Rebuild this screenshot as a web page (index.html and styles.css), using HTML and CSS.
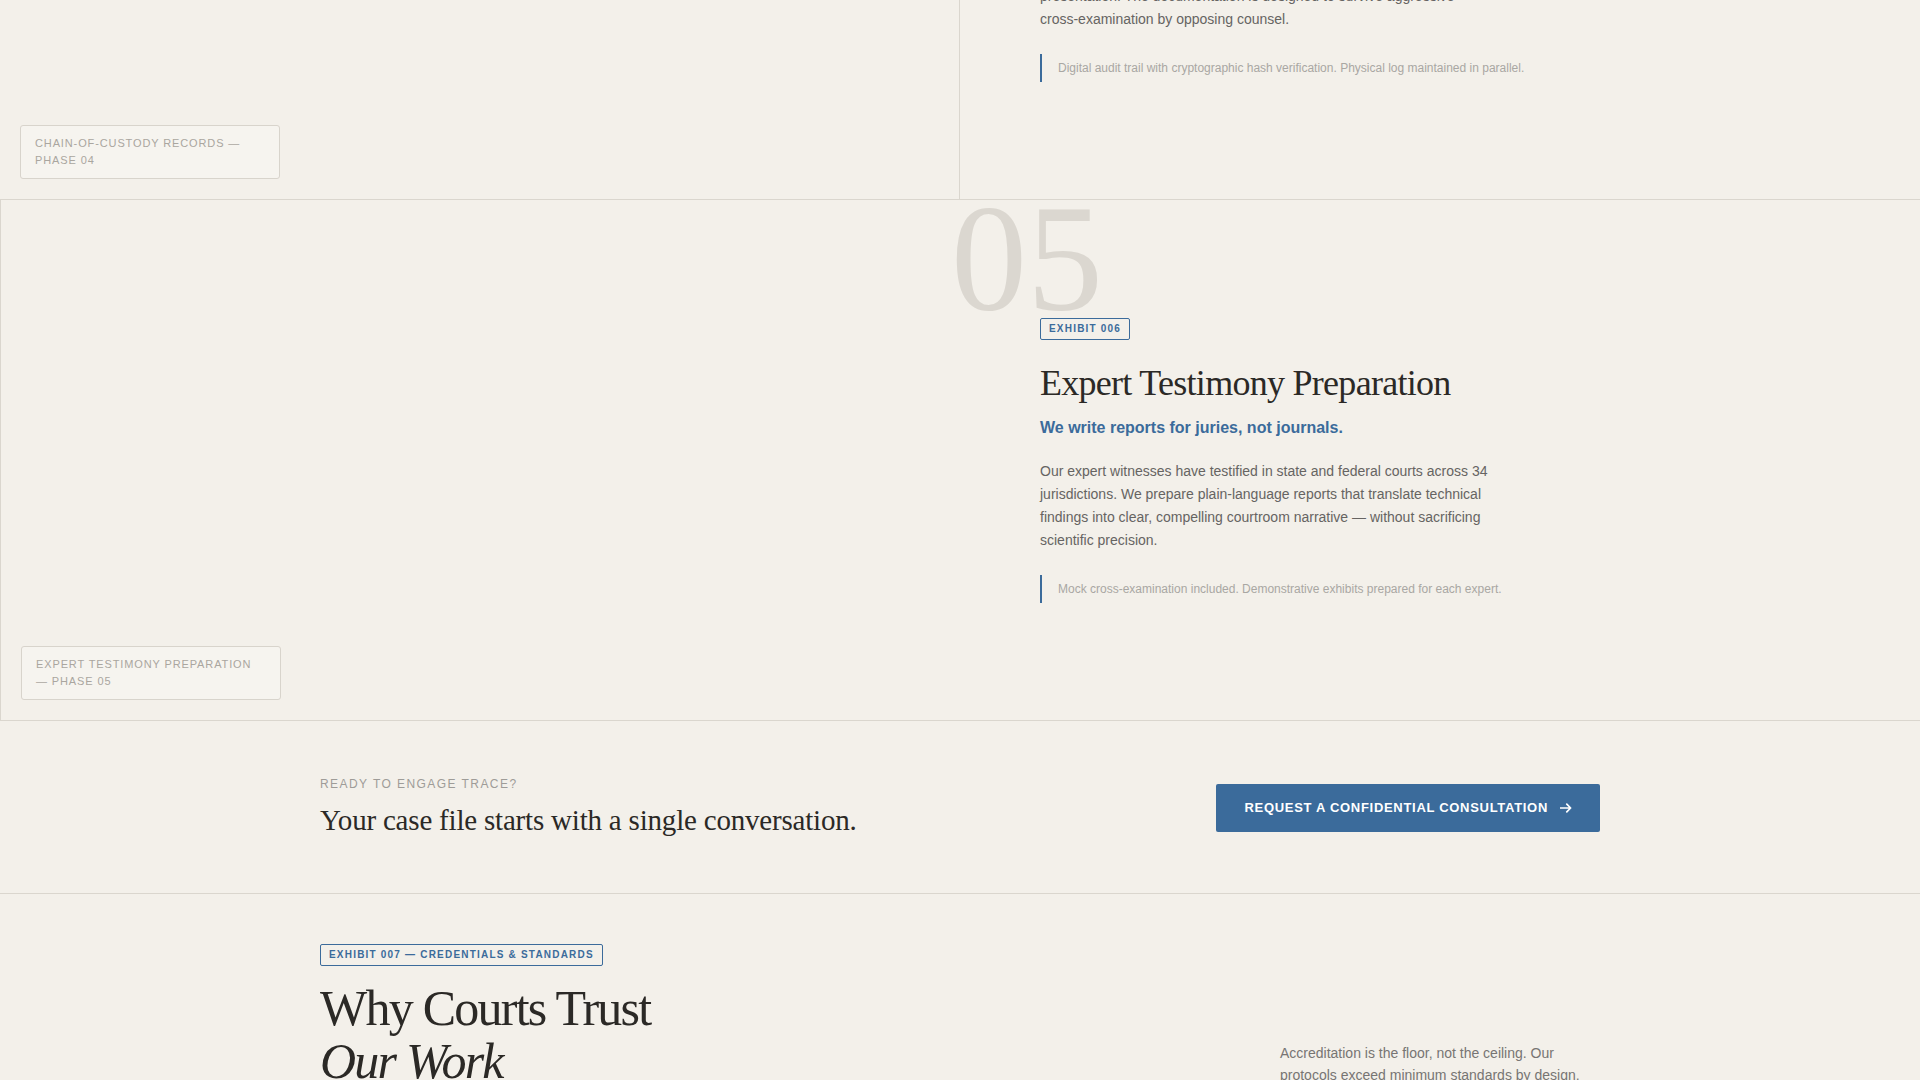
FILE: index.html
```html
<!DOCTYPE html>
<html lang="en">
<head>
<meta charset="utf-8">
<title>Trace — Forensic Services</title>
<link rel="stylesheet" href="styles.css">
</head>
<body>
<main class="page">

  <section class="phase">
    <div class="phase-visual phase-visual--rule-right">
      <span class="phase-label">Chain-of-Custody Records — Phase 04</span>
    </div>
    <div class="phase-body">
      <span class="phase-number">04</span>
      <span class="exhibit-tag">Exhibit 005</span>
      <h2 class="phase-title">Chain-of-Custody Records</h2>
      <p class="phase-lede">Every handoff signed, sealed and accounted for.</p>
      <p class="phase-text">Every item we handle is sealed, logged and tracked from collection to presentation. The documentation is designed to survive aggressive cross-examination by opposing counsel.</p>
      <blockquote class="phase-note">Digital audit trail with cryptographic hash verification. Physical log maintained in parallel.</blockquote>
    </div>
  </section>

  <section class="phase">
    <div class="phase-visual phase-visual--rule-left">
      <span class="phase-label">Expert Testimony Preparation — Phase 05</span>
    </div>
    <div class="phase-body">
      <span class="phase-number">05</span>
      <span class="exhibit-tag">Exhibit 006</span>
      <h2 class="phase-title">Expert Testimony Preparation</h2>
      <p class="phase-lede">We write reports for juries, not journals.</p>
      <p class="phase-text">Our expert witnesses have testified in state and federal courts across 34 jurisdictions. We prepare plain-language reports that translate technical findings into clear, compelling courtroom narrative — without sacrificing scientific precision.</p>
      <blockquote class="phase-note">Mock cross-examination included. Demonstrative exhibits prepared for each expert.</blockquote>
    </div>
  </section>

  <section class="cta">
    <div class="container cta-inner">
      <div class="cta-copy">
        <p class="eyebrow">Ready to engage Trace?</p>
        <h2 class="cta-title">Your case file starts with a single conversation.</h2>
      </div>
      <a class="button" href="#contact">
        <span>Request a Confidential Consultation</span>
        <svg class="button-arrow" width="12" height="10" viewBox="0 0 12 10" aria-hidden="true">
          <path d="M0.5 5H10.5M6.8 1.2L10.6 5L6.8 8.8" fill="none" stroke="currentColor" stroke-width="1.7" stroke-linecap="round" stroke-linejoin="round"/>
        </svg>
      </a>
    </div>
  </section>

  <section class="credentials">
    <div class="container credentials-grid">
      <div class="credentials-head">
        <span class="exhibit-tag">Exhibit 007 — Credentials &amp; Standards</span>
        <h2 class="credentials-title">Why Courts Trust<br><em>Our Work</em></h2>
      </div>
      <p class="credentials-aside">Accreditation is the floor, not the ceiling. Our protocols exceed minimum standards by design, and every method we use is validated against peer-reviewed benchmarks.</p>
    </div>
  </section>

</main>
</body>
</html>
```

FILE: styles.css
```css
* {
  box-sizing: border-box;
}

html,
body {
  margin: 0;
  background: #f3f0ea;
}

body {
  font-family: "Liberation Sans", Arial, sans-serif;
  color: #2b2926;
}

/* page is viewed part-way down the services list */
.page {
  margin-top: -299px;
}

/* ---------- phase rows ---------- */

.phase {
  display: grid;
  grid-template-columns: 1fr 1fr;
  border-bottom: 1px solid #dad6ce;
}

.phase-visual {
  position: relative;
}

.phase-visual--rule-right {
  border-right: 1px solid #dad6ce;
}

.phase-visual--rule-left {
  border-left: 1px solid #dad6ce;
}

.phase-label {
  position: absolute;
  left: 20px;
  bottom: 20px;
  max-width: 260px;
  padding: 9px 14px;
  border: 1px solid #d8d4cc;
  border-radius: 3px;
  background: rgba(255, 255, 255, 0.25);
  font-size: 11px;
  line-height: 17px;
  letter-spacing: 0.08em;
  text-transform: uppercase;
  color: #aaa69f;
}

.phase-body {
  position: relative;
  padding: 118px 80px 117px;
}

.phase-number {
  position: absolute;
  top: -17px;
  left: -9px;
  font-family: "Liberation Serif", "Times New Roman", serif;
  font-size: 152px;
  line-height: 1;
  color: #dbd7d0;
}

.exhibit-tag {
  position: relative;
  display: block;
  width: fit-content;
  padding: 4px 8px;
  border: 1px solid #3b6b9b;
  border-radius: 2px;
  font-size: 10px;
  line-height: 12px;
  font-weight: 700;
  letter-spacing: 0.12em;
  text-transform: uppercase;
  color: #3b6b9b;
}

.phase-title {
  margin: 24px 0 0;
  font-family: "Liberation Serif", "Times New Roman", serif;
  font-weight: 400;
  font-size: 36px;
  line-height: 1.1;
  letter-spacing: -0.02em;
  color: #2b2926;
}

.phase-lede {
  margin: 13px 0 0;
  font-size: 16px;
  line-height: 24px;
  font-weight: 700;
  color: #3b6b9b;
}

.phase-text {
  margin: 20px 0 0;
  max-width: 452px;
  font-size: 14px;
  line-height: 23px;
  color: #666462;
}

.phase-note {
  margin: 23px 0 0;
  padding: 5px 0 5px 16px;
  border-left: 2px solid #3b6b9b;
  font-size: 12px;
  line-height: 18px;
  color: #a9a7a3;
}

/* ---------- shared container ---------- */

.container {
  max-width: 1280px;
  margin: 0 auto;
}

/* ---------- call to action ---------- */

.cta {
  padding: 55px 0 54px;
  border-bottom: 1px solid #dad6ce;
}

.cta-inner {
  display: flex;
  justify-content: space-between;
  align-items: center;
}

.eyebrow {
  margin: 0 0 8px;
  font-size: 12px;
  line-height: 17px;
  letter-spacing: 0.12em;
  text-transform: uppercase;
  color: #9e9c98;
}

.cta-title {
  margin: 0;
  font-family: "Liberation Serif", "Times New Roman", serif;
  font-weight: 400;
  font-size: 29px;
  line-height: 38px;
  letter-spacing: -0.2px;
  color: #2b2926;
}

.button {
  display: inline-flex;
  align-items: center;
  gap: 12px;
  height: 48px;
  padding: 0 28px;
  border-radius: 2px;
  background: #3b6b9b;
  color: #ffffff;
  font-size: 13px;
  font-weight: 700;
  letter-spacing: 0.7px;
  text-transform: uppercase;
  text-decoration: none;
}

.button-arrow {
  display: block;
}

/* ---------- credentials ---------- */

.credentials {
  padding: 50px 0 80px;
}

.credentials-grid {
  display: grid;
  grid-template-columns: 1fr 320px;
  align-items: start;
}

.credentials-title {
  margin: 16px 0 0;
  font-family: "Liberation Serif", "Times New Roman", serif;
  font-weight: 400;
  font-size: 50px;
  line-height: 1.05;
  letter-spacing: -0.035em;
  color: #2b2926;
}

.credentials-title em {
  font-style: italic;
}

.credentials-aside {
  margin: 0;
  padding-top: 98px;
  font-size: 14px;
  line-height: 22px;
  color: #777573;
}
```
